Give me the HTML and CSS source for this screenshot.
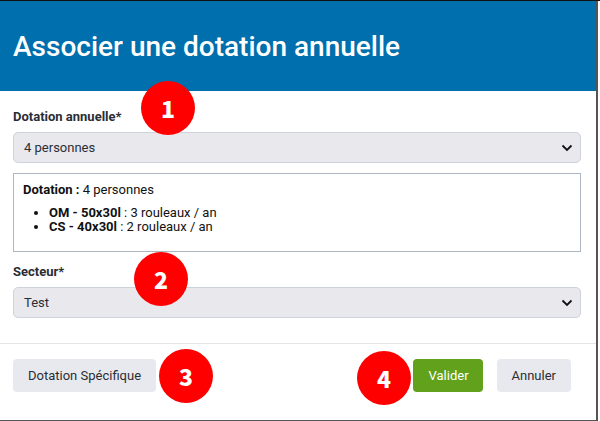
FILE: index.html
```html
<!DOCTYPE html>
<html lang="fr">
<head>
    <meta charset="UTF-8">
    <meta name="viewport" content="width=device-width, initial-scale=1.0">
    <link rel="stylesheet" href="styles.css">
</head>
<body>
    <div class="modal">
        <div class="modal-header">Associer une dotation annuelle</div>

        <div class="modal-body">
            <div class="field">
                <div class="field-label">Dotation annuelle*</div>
                <div class="select">
                    <span>4 personnes</span>
                    <svg class="chevron" width="12" height="8" viewBox="0 0 12 8"><path d="M1.5 1.5l4.5 4.5 4.5-4.5" fill="none" stroke="#111" stroke-width="1.8"/></svg>
                </div>
            </div>

            <div class="details">
                <div><b>Dotation :</b> 4 personnes</div>
                <ul>
                    <li><b>OM - 50x30l</b> : 3 rouleaux / an</li>
                    <li><b>CS - 40x30l</b> : 2 rouleaux / an</li>
                </ul>
            </div>

            <div class="field">
                <div class="field-label">Secteur*</div>
                <div class="select">
                    <span>Test</span>
                    <svg class="chevron" width="12" height="8" viewBox="0 0 12 8"><path d="M1.5 1.5l4.5 4.5 4.5-4.5" fill="none" stroke="#111" stroke-width="1.8"/></svg>
                </div>
            </div>
        </div>

        <div class="modal-footer">
            <button class="btn">Dotation Spécifique</button>
            <div class="footer-right">
                <button class="btn btn-green">Valider</button>
                <button class="btn">Annuler</button>
            </div>
        </div>
    </div>

    <div class="badge badge-1">1</div>
    <div class="badge badge-2">2</div>
    <div class="badge badge-3">3</div>
    <div class="badge badge-4">4</div>
</body>
</html>
```

FILE: styles.css
```css
html, body {
    margin: 0;
    height: 421px;
    overflow: hidden;
}

body {
    position: relative;
    box-sizing: border-box;
    border-top: 1px solid #111;
    background-color: white;
    font-family: Roboto, sans-serif;
    font-size: 13px;
    color: #2b2d35;
}

.modal {
    width: 596px;
    height: 419px;
    background-color: white;
    border-right: 2px solid #555;
    border-bottom: 1px solid #555;
}

.modal-header {
    height: 90px;
    box-sizing: border-box;
    padding: 30px 13px 0;
    background-color: #006fad;
    color: white;
    font-size: 28px;
    line-height: 32px;
    font-weight: 500;
}

.modal-body {
    height: 252px;
    box-sizing: border-box;
    padding: 18px 15px 0 13px;
}

.field-label {
    font-weight: bold;
    line-height: 16px;
    margin-bottom: 7px;
}

.select {
    display: flex;
    align-items: center;
    justify-content: space-between;
    height: 31px;
    box-sizing: border-box;
    padding: 0 7px 0 10px;
    background-color: #e8e8ed;
    border: 1px solid #cdd2dc;
    border-radius: 5px;
}

.details {
    height: 79px;
    box-sizing: border-box;
    margin: 10px 0 12px;
    padding: 8px 9px;
    border: 1px solid #aeb5c3;
    color: #111;
    line-height: 15px;
}

.details ul {
    margin: 9px 0 0;
    padding-left: 26px;
    line-height: 14px;
}

.modal-footer {
    display: flex;
    justify-content: space-between;
    padding: 15px 25px 0 13px;
    border-top: 1px solid #e4e4e8;
}

.footer-right {
    display: flex;
    gap: 14px;
}

.btn {
    height: 33px;
    padding: 0 15px;
    background-color: #e8e9ee;
    border: none;
    border-radius: 4px;
    color: #2b2d35;
    font-family: Roboto, sans-serif;
    font-size: 13px;
}

.btn-green {
    width: 70px;
    padding: 0 14px 0 16px;
    background-color: #62a11b;
    color: white;
}

.badge {
    position: absolute;
    width: 54px;
    height: 54px;
    border-radius: 50%;
    background-color: #fe0000;
    color: white;
    font-family: "Noto Sans CJK SC", sans-serif;
    font-size: 23px;
    font-weight: 900;
    line-height: 54px;
    text-align: center;
}

.badge-1 { left: 141px; top: 80px; }
.badge-2 { left: 134px; top: 251px; }
.badge-3 { left: 159px; top: 348px; }
.badge-4 { left: 357px; top: 350px; }
```
